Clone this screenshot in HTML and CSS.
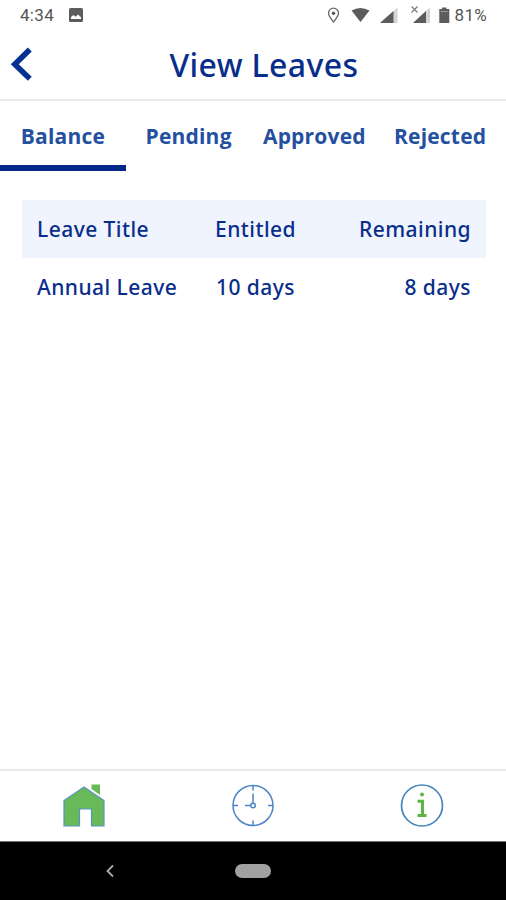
FILE: index.html
```
<!DOCTYPE html>
<html lang="en">
<head>
    <meta charset="UTF-8">
    <title>View Leaves</title>
    <meta name="viewport" content="width=device-width, initial-scale=1">
    <link rel="stylesheet" href="styles.css">
</head>
<body>
<div class="app">
    <div class="status">
        <span class="time">4:34</span>
        <svg class="pic" width="14" height="14" viewBox="0 0 14 14"><rect width="14" height="14" rx="1.5" fill="#5c5c5c"/><path d="M2 11V9l2.500-2 2 1.800L9 6.500l3 2.800V11z" fill="#fff"/></svg>
        <svg class="signals" width="126" height="20" viewBox="0 0 126 20">
            <path d="M8.500 17C6 13.500 3.500 11 3.500 8.200a5 5 0 0 1 10 0c0 2.800-2.500 5.300-5 8.800z" fill="none" stroke="#666" stroke-width="1.300"/>
            <circle cx="8.500" cy="8.300" r="1.700" fill="#555"/>
            <path d="M26.500 5.500q9-5 18 0L35.500 17z" fill="#5c5c5c"/>
            <path d="M72.500 2.500V18H55z" fill="#d4d4d4"/>
            <path d="M68.500 6V18H55z" fill="#5c5c5c"/>
            <path d="M105 2.500V18H88z" fill="#d4d4d4"/>
            <path d="M101 6V18H88z" fill="#5c5c5c"/>
            <path d="M86.500 1.500l6 6M92.500 1.500l-6 6" stroke="#777" stroke-width="1.100"/>
            <path d="M117 2.500h4.500v1.500h2.800V18h-10V4h2.700z" fill="#5c5c5c"/>
            <path d="M115.500 6.500h7.500" stroke="#999"/>
        </svg>
        <span class="percent">81%</span>
    </div>
    <div class="header">
        <svg class="back" width="24" height="36" viewBox="0 0 24 36"><path d="M19.800 3.500L4.800 18.200l15 14.500" fill="none" stroke="#053190" stroke-width="5.600"/></svg>
        <h1>View Leaves</h1>
    </div>
    <ul class="tabs">
        <li class="on"><span>Balance</span></li>
        <li><span>Pending</span></li>
        <li><span>Approved</span></li>
        <li><span>Rejected</span></li>
    </ul>
    <div class="table">
        <div class="row head"><span>Leave Title</span><span>Entitled</span><span>Remaining</span></div>
        <div class="row"><span>Annual Leave</span><span>10 days</span><span>8 days</span></div>
    </div>
    <div class="footer">
        <svg width="44" height="44" viewBox="0 0 44 44"><path d="M29.500 .5h8.500v10.500l-8.500-6z" fill="#68b958"/><path d="M2 42V16.500L22 3l20 13.500V42H29.500V25h-12v17z" fill="#68b958" stroke="#5795bf" stroke-width="1.200"/></svg>
        <svg width="44" height="44" viewBox="0 0 44 44" fill="none" stroke="#4c83c9" stroke-width="1.500"><circle cx="22" cy="21.500" r="20"/><path d="M22 1.500v5M22 36.500v5M2 21.500h5M37 21.500h5M22 9.500V19M14 21.500h5.500"/><circle cx="22" cy="21.500" r="2.300"/></svg>
        <svg width="44" height="44" viewBox="0 0 44 44"><circle cx="22" cy="21.500" r="20.500" fill="none" stroke="#4585bd" stroke-width="1.700"/><circle cx="22" cy="10.500" r="2" fill="#5cb544"/><path d="M17.500 17.300h5v14M17.500 31.500h9" fill="none" stroke="#5cb544" stroke-width="3"/></svg>
    </div>
    <div class="navbar">
        <svg width="10" height="14" viewBox="0 0 10 14"><path d="M8 1.500L2.500 7 8 12.500" fill="none" stroke="#aaa" stroke-width="1.800"/></svg>
        <div class="pill"></div>
        <i></i>
    </div>
</div>
</body>
</html>
```

FILE: styles.css
```
*{margin:0;padding:0;box-sizing:border-box;}
body{font-family:"Noto Sans","Open Sans",sans-serif;background:#fff;color:#092d8a;}
ul,li{list-style:none;}
svg{display:block;flex:none;}
.app{display:flex;flex-direction:column;width:506px;height:900px;overflow:hidden;}
.status{display:flex;align-items:center;height:31px;padding:0 19px 0 20px;font:400 17px/31px Roboto,sans-serif;color:#555;letter-spacing:.3px;}
.time{width:49px;}
.signals{margin-left:auto;margin-right:4px;}
.status svg{margin-top:-1px;}
.header{display:grid;grid-template-columns:82px 1fr 60px;align-items:center;height:70px;border-bottom:2px solid #e8e8e8;}
.back{margin:-2px 0 0 10px;}
h1{font-size:32px;font-weight:500;line-height:42px;letter-spacing:.4px;text-align:center;white-space:nowrap;}
.tabs{display:grid;grid-template-columns:repeat(4,1fr);height:70px;padding-right:3px;font-family:"Open Sans",sans-serif;font-size:21px;font-weight:700;letter-spacing:.2px;color:#2450a0;}
.tabs li{display:flex;justify-content:center;height:70px;line-height:70px;}
.tabs .on{border-bottom:6px solid #032889;}
.table{margin:29px 20px 0 22px;font-size:21px;font-weight:500;letter-spacing:.45px;}
.row{display:grid;grid-template-columns:152px 1fr 149px;align-items:center;height:58px;padding:0 15px;white-space:nowrap;}
.row span:nth-child(2){text-align:center;}
.row span:last-child{text-align:right;}
.head{background:#eff4ff;}
.footer{display:grid;grid-template-columns:repeat(3,1fr);justify-items:center;align-items:center;height:72px;margin-top:auto;border-top:2px solid #e8e8e8;}
.navbar{display:grid;grid-template-columns:repeat(3,1fr);align-items:center;height:59px;border-top:1px solid #777;background:#000;}
.navbar svg{margin-left:105px;}
.pill{justify-self:center;width:36px;height:14px;border-radius:7px;background:#a0a0a0;}
```
